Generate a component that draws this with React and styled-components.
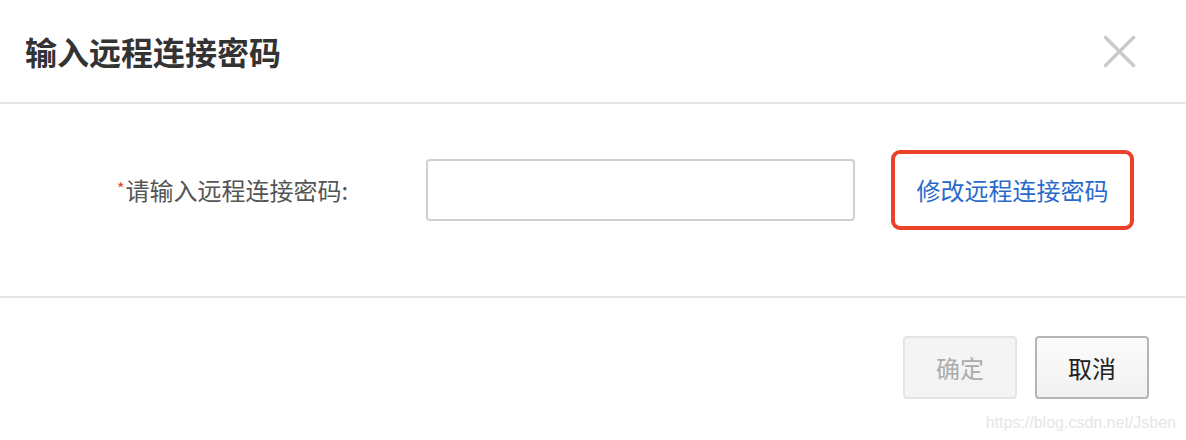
import React, { useState } from 'react'
import styled, { createGlobalStyle } from 'styled-components'

const GlobalStyle = createGlobalStyle`
  html, body {
    margin: 0;
    padding: 0;
    background: #fff;
  }
  body {
    font-family: "Noto Sans CJK SC", "Liberation Sans", sans-serif;
  }
`

const Dialog = styled.div`
  position: relative;
  width: 1186px;
  height: 440px;
  display: flex;
  flex-direction: column;
  background: #fff;
  overflow: hidden;
`

const Header = styled.header`
  height: 102px;
  flex: none;
  display: flex;
  align-items: center;
  justify-content: space-between;
  padding: 0 50px 0 25px;
  border-bottom: 2px solid #e6e6e6;
`

const Title = styled.h1`
  margin: 0;
  font-size: 32px;
  font-weight: 700;
  color: #333;
  line-height: 1;
`

const CloseButton = styled.button`
  width: 33px;
  height: 33px;
  padding: 0;
  border: none;
  background: none;
  cursor: pointer;
  display: flex;
  align-items: center;
  justify-content: center;
`

const Body = styled.section`
  height: 194px;
  flex: none;
  box-sizing: border-box;
  padding-top: 46px;
  border-bottom: 2px solid #e6e6e6;
  display: flex;
  align-items: flex-start;
`

const Row = styled.div`
  height: 80px;
  display: flex;
  align-items: center;
`

const Label = styled.label`
  flex: none;
  width: 426px;
  box-sizing: border-box;
  padding-left: 117px;
  font-size: 24px;
  color: #555;
  line-height: 1;
  white-space: nowrap;
`

const Star = styled.span`
  color: #e8412c;
  font-size: 16px;
  vertical-align: 5px;
  margin-right: 1px;
`

const Input = styled.input`
  flex: none;
  width: 429px;
  height: 62px;
  box-sizing: border-box;
  border: 2px solid #d0d0d0;
  border-radius: 4px;
  padding: 0 12px;
  font-size: 22px;
  outline: none;
  background: #fff;
`

const LinkBox = styled.div`
  flex: none;
  margin-left: 36px;
  width: 243px;
  height: 80px;
  box-sizing: border-box;
  border: 4px solid #ea4229;
  border-radius: 9px;
  display: flex;
  align-items: center;
  justify-content: center;
`

const ChangeLink = styled.a`
  font-size: 24px;
  color: #2a69cc;
  text-decoration: none;
  line-height: 1;
  cursor: pointer;
`

const Footer = styled.footer`
  flex: 1;
  display: flex;
  justify-content: flex-end;
  align-items: flex-start;
  gap: 18px;
  padding: 38px 37px 0 0;
`

const Button = styled.button`
  width: 114px;
  height: 63px;
  box-sizing: border-box;
  border-radius: 4px;
  font-family: "Noto Sans CJK SC", sans-serif;
  font-size: 24px;
  border: 2px solid ${(p) => (p.disabled ? '#e4e4e4' : '#b4b4b4')};
  background: ${(p) => (p.disabled ? '#f4f4f4' : 'linear-gradient(#fbfbfb, #f1f1f1)')};
  color: ${(p) => (p.disabled ? '#ababab' : '#222')};
  cursor: ${(p) => (p.disabled ? 'default' : 'pointer')};
`

const Watermark = styled.span`
  position: absolute;
  right: 10px;
  bottom: 8px;
  font-family: "Liberation Sans", Arial, sans-serif;
  font-size: 16px;
  color: #e6e6e6;
  pointer-events: none;
`

const CloseIcon = () => (
  <svg width="33" height="33" viewBox="0 0 33 33">
    <path d="M1.5 1.5 L31.5 31.5 M31.5 1.5 L1.5 31.5" stroke="#c9c9c9" strokeWidth="3.2" strokeLinecap="butt" />
  </svg>
)

export default function App () {
  const [password, setPassword] = useState('')

  return (
    <>
      <GlobalStyle />
      <Dialog>
        <Header>
          <Title>输入远程连接密码</Title>
          <CloseButton aria-label="close"><CloseIcon /></CloseButton>
        </Header>
        <Body>
          <Row>
            <Label htmlFor='remote-pwd'><Star>*</Star>请输入远程连接密码:</Label>
            <Input id='remote-pwd' type='password' value={password} onChange={(e) => setPassword(e.target.value)} />
            <LinkBox>
              <ChangeLink>修改远程连接密码</ChangeLink>
            </LinkBox>
          </Row>
        </Body>
        <Footer>
          <Button disabled={!password}>确定</Button>
          <Button>取消</Button>
        </Footer>
        <Watermark>https://blog.csdn.net/Jsben</Watermark>
      </Dialog>
    </>
  )
}
